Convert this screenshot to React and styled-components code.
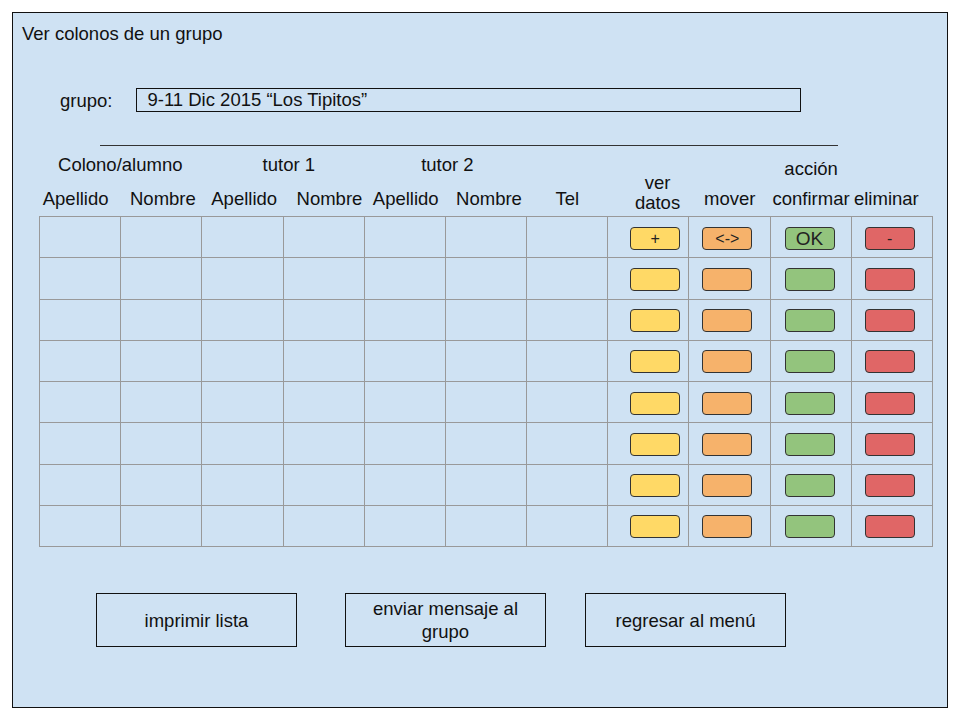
import styled, { createGlobalStyle } from 'styled-components';

const GlobalStyle = createGlobalStyle`
    html, body {
        margin: 0;
        padding: 0;
        background: #fff;
    }
    body {
        font-family: "Liberation Sans", Arial, sans-serif;
        color: #111;
    }
`;

const actions = [
    { key: 'ver', color: '#ffd966', pad: 22, first: '+', size: 16 },
    { key: 'mover', color: '#f6b26b', pad: 13, first: '<->', size: 16 },
    { key: 'ok', color: '#93c47d', pad: 14, first: 'OK', size: 19 },
    { key: 'del', color: '#e06666', pad: 13, first: '-', size: 16 },
];

const App = () => {
    const rows = Array.from({ length: 8 }, (_, i) => i);
    return (
        <>
            <GlobalStyle />
            <Frame>
                <Title>Ver colonos de un grupo</Title>
                <GroupRow>
                    <GroupLabel>grupo:</GroupLabel>
                    <GroupBox>9-11 Dic 2015 “Los Tipitos”</GroupBox>
                </GroupRow>
                <Divider />
                <HeadGrid>
                    <HeadCell $col="1 / span 2" $row="1" $pb={4}>Colono/alumno</HeadCell>
                    <HeadCell $col="3 / span 2" $row="1" $pb={4} $pl={12}>tutor 1</HeadCell>
                    <HeadCell $col="5 / span 2" $row="1" $pb={4} $pl={4}>tutor 2</HeadCell>
                    <HeadCell $col="10" $row="1" $pb={0}>acción</HeadCell>
                    <HeadCell $col="1" $row="2" $pb={7} $pr={8}>Apellido</HeadCell>
                    <HeadCell $col="2" $row="2" $pb={7} $pl={4}>Nombre</HeadCell>
                    <HeadCell $col="3" $row="2" $pb={7} $pl={4}>Apellido</HeadCell>
                    <HeadCell $col="4" $row="2" $pb={7} $pl={12}>Nombre</HeadCell>
                    <HeadCell $col="5" $row="2" $pb={7} $pl={2}>Apellido</HeadCell>
                    <HeadCell $col="6" $row="2" $pb={7} $pl={6}>Nombre</HeadCell>
                    <HeadCell $col="7" $row="2" $pb={7}>Tel</HeadCell>
                    <HeadCell $col="8" $row="1 / span 2" $pb={3} $pl={18}>ver<br />datos</HeadCell>
                    <HeadCell $col="9" $row="2" $pb={7}>mover</HeadCell>
                    <HeadCell $col="10" $row="2" $pb={7} $wide>confirmar</HeadCell>
                    <HeadCell $col="11" $row="2" $pb={7} $pr={12}>eliminar</HeadCell>
                </HeadGrid>
                <Table>
                    <tbody>
                        {rows.map((r) => (
                            <Row key={r}>
                                {Array.from({ length: 7 }, (_, c) => (
                                    <Cell key={c} />
                                ))}
                                {actions.map((a) => (
                                    <Cell key={a.key} $pad={a.pad}>
                                        <ActionButton $bg={a.color} $size={a.size}>
                                            {r === 0 ? a.first : ''}
                                        </ActionButton>
                                    </Cell>
                                ))}
                            </Row>
                        ))}
                    </tbody>
                </Table>
                <Footer>
                    <BigButton>imprimir lista</BigButton>
                    <BigButton $ml={48}>enviar mensaje al grupo</BigButton>
                    <BigButton $ml={39}>regresar al menú</BigButton>
                </Footer>
            </Frame>
        </>
    );
};
export default App;


const Frame = styled.div`
    margin: 12px;
    width: 934px;
    height: 694px;
    border: 1px solid #111;
    background: #cfe2f3;
    display: flex;
    flex-direction: column;
    font-size: 18.5px;
`;

const Title = styled.div`
    margin: 10px 0 0 9px;
    line-height: 21px;
`;

const GroupRow = styled.div`
    display: flex;
    align-items: center;
    margin: 44px 0 0 47px;
    gap: 24px;
`;

const GroupLabel = styled.span`
    line-height: 21px;
`;

const GroupBox = styled.div`
    width: 653px;
    height: 22px;
    line-height: 22px;
    border: 1px solid #111;
    padding-left: 10px;
`;

const Divider = styled.div`
    margin: 33px 0 0 87px;
    width: 738px;
    height: 1px;
    background: #333;
`;

const HeadGrid = styled.div`
    display: grid;
    grid-template-columns: repeat(11, 1fr);
    grid-template-rows: 33px 37px;
    width: 894px;
    margin-left: 26px;
`;

const HeadCell = styled.div`
    grid-column: ${(p) => p.$col};
    grid-row: ${(p) => p.$row};
    align-self: end;
    text-align: center;
    line-height: 20px;
    white-space: nowrap;
    padding-bottom: ${(p) => p.$pb || 0}px;
    padding-left: ${(p) => p.$pl || 0}px;
    padding-right: ${(p) => p.$pr || 0}px;
    margin: ${(p) => (p.$wide ? '0 -8px' : '0')};
`;

const Table = styled.table`
    border-collapse: collapse;
    table-layout: fixed;
    width: 894px;
    margin-left: 26px;
`;

const Row = styled.tr`
    height: 41.25px;
`;

const Cell = styled.td`
    border: 1px solid #999;
    padding: 2px 0 0 ${(p) => p.$pad || 0}px;
    vertical-align: middle;
`;

const ActionButton = styled.div`
    width: 48px;
    height: 21px;
    border: 1px solid #333;
    border-radius: 4px;
    background: ${(p) => p.$bg};
    font-size: ${(p) => p.$size}px;
    line-height: 21px;
    text-align: center;
    color: #222;
`;

const Footer = styled.div`
    display: flex;
    margin: 46px 0 0 83px;
`;

const BigButton = styled.div`
    height: 52px;
    width: 159px;
    padding: 0 20px;
    border: 1px solid #111;
    margin-left: ${(p) => p.$ml || 0}px;
    display: flex;
    align-items: center;
    justify-content: center;
    text-align: center;
    line-height: 23px;
`;
